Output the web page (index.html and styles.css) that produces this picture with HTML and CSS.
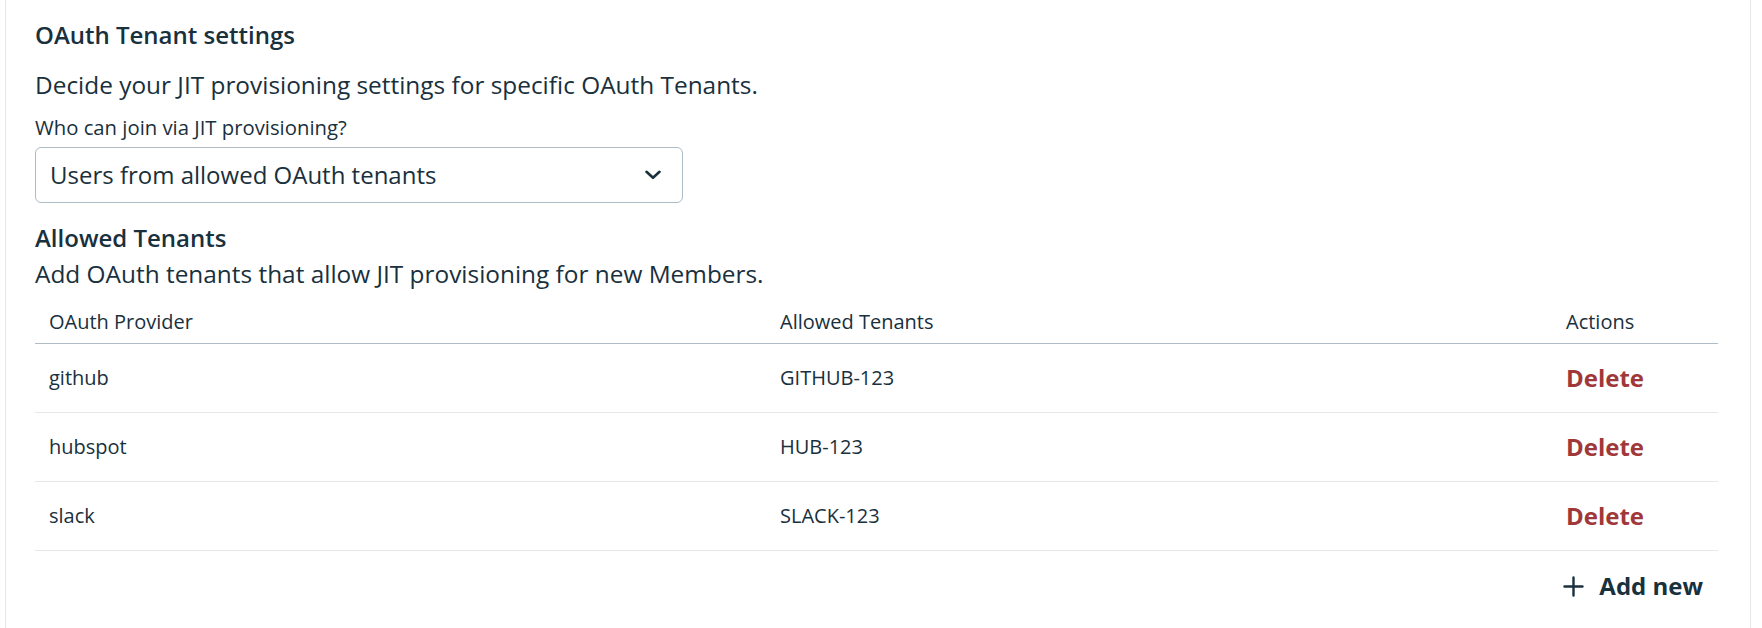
FILE: index.html
```html
<!DOCTYPE html>
<html lang="en">
<head>
<meta charset="utf-8">
<title>OAuth Tenant settings</title>
<link rel="stylesheet" href="styles.css">
</head>
<body>
<div class="card">
  <h2 class="title">OAuth Tenant settings</h2>
  <p class="desc">Decide your JIT provisioning settings for specific OAuth Tenants.</p>
  <label class="label">Who can join via JIT provisioning?</label>
  <div class="select">
    <span class="select-value">Users from allowed OAuth tenants</span>
    <svg class="chevron" width="18" height="10" viewBox="0 0 18 10"><path d="M2.5 1.8 L9 7.8 L15.5 1.8" fill="none" stroke="#19303d" stroke-width="2.6" stroke-linecap="round" stroke-linejoin="round"/></svg>
  </div>
  <h3 class="subtitle">Allowed Tenants</h3>
  <p class="desc">Add OAuth tenants that allow JIT provisioning for new Members.</p>
  <table class="tenants">
    <colgroup><col class="c1"><col class="c2"><col class="c3"></colgroup>
    <thead>
      <tr><th>OAuth Provider</th><th>Allowed Tenants</th><th>Actions</th></tr>
    </thead>
    <tbody>
      <tr><td>github</td><td>GITHUB-123</td><td class="act"><span class="delete">Delete</span></td></tr>
      <tr><td>hubspot</td><td>HUB-123</td><td class="act"><span class="delete">Delete</span></td></tr>
      <tr><td>slack</td><td>SLACK-123</td><td class="act"><span class="delete">Delete</span></td></tr>
    </tbody>
  </table>
  <div class="actions">
    <button class="add-btn">
      <svg width="21" height="21" viewBox="0 0 21 21"><path d="M10.5 1.5 V19.5 M1.5 10.5 H19.5" stroke="#19303d" stroke-width="2.4" stroke-linecap="round"/></svg>
      <span>Add new</span>
    </button>
  </div>
</div>
</body>
</html>
```

FILE: styles.css
```css
html, body {
  margin: 0;
  padding: 0;
  background: #ffffff;
}
body {
  font-family: "Open Sans", "Noto Sans", sans-serif;
  color: #19303d;
}
.card {
  box-sizing: border-box;
  margin-left: 5px;
  width: 1746px;
  min-height: 628px;
  border-left: 1px solid #e5e8eb;
  border-right: 1px solid #e5e8eb;
  padding: 21px 32px 0 29px;
}
.title {
  margin: 0;
  font-size: 24px;
  line-height: 28px;
  font-weight: 600;
}
.desc {
  margin: 22px 0 0;
  font-size: 24.4px;
  line-height: 28px;
  font-weight: 400;
}
.label {
  display: block;
  margin-top: 14px;
  font-size: 20.3px;
  line-height: 28px;
}
.select {
  box-sizing: border-box;
  margin-top: 6px;
  width: 648px;
  height: 56px;
  border: 1px solid #adbcc5;
  border-radius: 6px;
  display: flex;
  align-items: center;
  justify-content: space-between;
  padding: 0 20px 0 14px;
}
.select-value {
  font-size: 24px;
  line-height: 28px;
}
.chevron {
  display: block;
}
.subtitle {
  margin: 21px 0 0;
  font-size: 24px;
  line-height: 28px;
  font-weight: 600;
}
.subtitle + .desc {
  margin-top: 8px;
}
.tenants {
  margin-top: 12px;
  width: 100%;
  border-collapse: collapse;
  table-layout: fixed;
}
.c1 { width: 731px; }
.c2 { width: 786px; }
.tenants th {
  text-align: left;
  font-weight: 400;
  font-size: 20px;
  line-height: 24px;
  padding: 10px 14px 9px;
  border-bottom: 1px solid #adbcc5;
}
.tenants td {
  font-size: 20px;
  line-height: 24px;
  padding: 22px 14px;
  border-bottom: 1px solid #e5e8eb;
}
.tenants td.act {
  font-size: 24px;
}
.delete {
  color: #a0383a;
  font-weight: 700;
}
.actions {
  display: flex;
  justify-content: flex-end;
  margin-top: 11px;
}
.add-btn {
  display: flex;
  align-items: center;
  gap: 15px;
  background: none;
  border: none;
  padding: 12px 15px;
  font-family: inherit;
  font-size: 24px;
  line-height: 24px;
  font-weight: 700;
  color: #19303d;
  cursor: pointer;
}
.add-btn svg {
  display: block;
}
```
